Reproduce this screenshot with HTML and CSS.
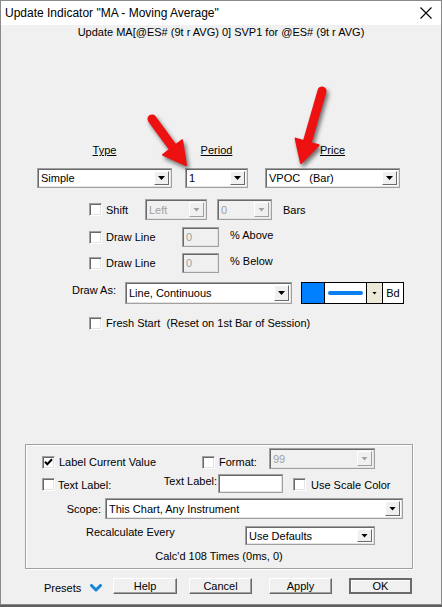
FILE: index.html
```html
<!DOCTYPE html>
<html>
<head>
<meta charset="utf-8">
<link rel="stylesheet" href="styles.css">
</head>
<body>
<div class="window">
  <div class="titlebar">
    <span class="title">Update Indicator "MA - Moving Average"</span>
    <svg class="close" width="12" height="12" viewBox="0 0 12 12"><path d="M0.5 0.5L11.5 11.5M11.5 0.5L0.5 11.5" stroke="#000" stroke-width="1.1" fill="none"/></svg>
  </div>
  <div class="subtitle">Update MA[@ES# (9t r AVG) 0] SVP1 for @ES# (9t r AVG)</div>

  <div class="row hdrs">
    <div class="c1 hdr"><u>Type</u></div>
    <div class="c2 hdr"><u>Period</u></div>
    <div class="c3 hdr"><u>Price</u></div>
  </div>
  <div class="row combos">
    <div class="c1 combo"><span class="val">Simple</span><span class="dd"><i class="tri"></i></span></div>
    <div class="c2 combo"><span class="val">1</span><span class="dd"><i class="tri"></i></span></div>
    <div class="c3 combo"><span class="val">VPOC   (Bar)</span><span class="dd"><i class="tri"></i></span></div>
  </div>

  <div class="row r-shift">
    <span class="cb"></span><span class="lbl w-shift">Shift</span>
    <div class="combo dis w-left"><span class="val">Left</span><span class="dd"><i class="tri"></i></span></div>
    <div class="combo dis w-zero"><span class="val">0</span><span class="dd"><i class="tri"></i></span></div>
    <span class="bars">Bars</span>
  </div>
  <div class="row r-dl1">
    <span class="cb"></span><span class="lbl w-dl">Draw Line</span>
    <span class="inp dis w-pct">0</span><span class="pct">% Above</span>
  </div>
  <div class="row r-dl2">
    <span class="cb"></span><span class="lbl w-dl">Draw Line</span>
    <span class="inp dis w-pct">0</span><span class="pct">% Below</span>
  </div>
  <div class="row r-drawas">
    <span class="drawas">Draw As:</span>
    <div class="combo w-drawas"><span class="val">Line, Continuous</span><span class="dd"><i class="tri"></i></span></div>
    <div class="colorctl">
      <span class="swatch"></span>
      <span class="linebox"><i class="bluline"></i></span>
      <span class="cdd"><i class="tri"></i></span>
      <span class="bd">Bd</span>
    </div>
  </div>
  <div class="row r-fresh">
    <span class="cb"></span><span class="lbl">Fresh Start&nbsp; (Reset on 1st Bar of Session)</span>
  </div>

  <div class="group">
    <div class="grow g1">
      <span class="cb checked"><svg width="9" height="9" viewBox="0 0 9 9"><path d="M1 3.8L3.3 6.3L8 1.2" stroke="#000" stroke-width="2" fill="none"/></svg></span>
      <span class="lbl w-lcv">Label Current Value</span>
      <span class="cb"></span>
      <span class="lbl w-fmt">Format:</span>
      <div class="combo dis w-fmtc"><span class="val">99</span><span class="dd"><i class="tri"></i></span></div>
    </div>
    <div class="grow g2">
      <span class="cb"></span>
      <span class="lbl w-tl">Text Label:</span>
      <span class="tl2">Text Label:</span>
      <span class="inp w-tlin"></span>
      <span class="cb cb-usc"></span>
      <span class="lbl lbl-usc">Use Scale Color</span>
    </div>
    <div class="grow g3">
      <span class="scope">Scope:</span>
      <div class="combo w-scope"><span class="val">This Chart, Any Instrument</span><span class="dd"><i class="tri"></i></span></div>
    </div>
    <div class="grow g4">
      <span class="recalc">Recalculate Every</span>
      <div class="combo w-recalc"><span class="val">Use Defaults</span><span class="dd"><i class="tri"></i></span></div>
    </div>
    <div class="g5">Calc'd 108 Times (0ms, 0)</div>
  </div>

  <div class="row r-btns">
    <span class="presets">Presets</span>
    <svg class="chev" width="12" height="8" viewBox="0 0 12 8"><path d="M1.5 1.5L6 6L10.5 1.5" stroke="#1585d8" stroke-width="3" fill="none" stroke-linecap="round" stroke-linejoin="round"/></svg>
    <span class="pbtn b-help">Help</span>
    <span class="pbtn b-cancel">Cancel</span>
    <span class="pbtn b-apply">Apply</span>
    <span class="pbtn b-ok">OK</span>
  </div>

  <svg class="arrows" width="442" height="605" viewBox="0 0 442 605">
    <g fill="#ee1111" stroke="#ee1111">
      <line x1="152" y1="119" x2="174" y2="149" stroke-width="9" stroke-linecap="round"/>
      <polygon points="186,165 182.1,140.2 163.1,154.8" stroke-width="2" stroke-linejoin="round"/>
      <line x1="322" y1="91" x2="307" y2="143" stroke-width="9" stroke-linecap="round"/>
      <polygon points="301,163 318.6,145.2 295.6,138.6" stroke-width="2" stroke-linejoin="round"/>
    </g>
  </svg>
</div>
</body>
</html>
```

FILE: styles.css
```css
* { box-sizing: border-box; }
html, body { margin: 0; padding: 0; }
body {
  width: 442px;
  height: 607px;
  overflow: hidden;
  background: #5e5e5e;
  font-family: "Liberation Sans", Arial, sans-serif;
  font-size: 11px;
  color: #000;
}
.window {
  position: relative;
  width: 442px;
  height: 605px;
  background: #f0f0f0;
  border: 1px solid #8a8a8a;
}
.titlebar {
  height: 24px;
  background: #fff;
  display: flex;
  align-items: center;
  justify-content: space-between;
  padding: 0 9px 0 4px;
}
.title { font-size: 12px; }
.subtitle {
  margin-top: 1px;
  height: 13px;
  line-height: 13px;
  text-align: center;
}
.row { display: flex; align-items: center; }
.c1 { width: 135px; margin-left: 36px; }
.c2 { width: 63px; margin-left: 13px; }
.c3 { width: 135px; margin-left: 17px; }
.hdrs { margin-top: 105px; height: 13px; }
.hdr { text-align: center; line-height: 13px; }
.combos { margin-top: 11px; height: 20px; }
.combos .combo { height: 20px; }

.combo {
  display: flex;
  align-items: stretch;
  background: #fff;
  border: 1px solid #a0a0a0;
  box-shadow: inset 1px 1px #696969, inset -1px -1px #e3e3e3;
  padding: 2px;
  height: 21px;
}
.combo .val {
  flex: 1;
  white-space: pre;
  overflow: hidden;
  padding-left: 1px;
  display: flex;
  align-items: center;
}
.combo .dd {
  width: 15px;
  background: #f0f0f0;
  border: 1px solid;
  border-color: #fff #696969 #696969 #fff;
  display: flex;
  align-items: center;
  justify-content: center;
}
.tri {
  display: block;
  width: 7px;
  height: 4px;
  background: #000;
  clip-path: polygon(0 0, 100% 0, 50% 100%);
}
.combo.dis { background: #f0f0f0; color: #a0a0a0; }
.combo.dis .dd { border-color: #fff #a0a0a0 #a0a0a0 #fff; }
.combo.dis .tri { background: #a0a0a0; }

.cb {
  flex: none;
  width: 13px;
  height: 13px;
  background: #fff;
  border: 1px solid;
  border-color: #a0a0a0 #fff #fff #a0a0a0;
  box-shadow: inset 1px 1px #696969, inset -1px -1px #e3e3e3;
  display: flex;
  align-items: center;
  justify-content: center;
}
.lbl { margin-left: 4px; white-space: nowrap; line-height: 13px; }

.inp {
  display: flex;
  align-items: flex-end;
  height: 20px;
  background: #fff;
  border: 1px solid #a0a0a0;
  box-shadow: inset 1px 1px #696969, inset -1px -1px #e3e3e3;
  padding: 0 3px 3px;
}
.inp.dis { background: #f0f0f0; color: #a0a0a0; }

.r-shift { margin-top: 11px; height: 21px; margin-left: 88px; }
.w-shift { width: 39px; margin-top: 2px; }
.w-left { width: 62px; }
.w-zero { width: 55px; margin-left: 10px; }
.bars { margin-left: 11px; }

.r-dl1 { margin-top: 7px; height: 20px; margin-left: 88px; align-items: center; }
.r-dl2 { margin-top: 6px; height: 20px; margin-left: 88px; align-items: center; }
.w-dl { width: 76px; }
.w-pct { width: 37px; }
.pct { margin-left: 11px; align-self: flex-start; margin-top: 2px; }

.r-drawas { margin-top: 9px; height: 22px; margin-left: 71px; align-items: flex-start; }
.drawas { width: 53px; margin-top: 2px; }
.w-drawas { width: 167px; height: 22px; }
.colorctl {
  margin-left: 9px;
  width: 103px;
  height: 22px;
  display: flex;
  border: 1px solid #000;
  background: #fff;
}
.swatch { width: 23px; background: #0080ff; border-right: 1px solid #000; }
.linebox { width: 42px; display: flex; align-items: center; justify-content: center; border-right: 1px solid #000; }
.bluline { display: block; width: 35px; height: 4px; border-radius: 2px; background: #0a7ff0; }
.cdd { width: 15px; background: #ece9d8; display: flex; align-items: center; justify-content: center; }
.cdd .tri { width: 5px; height: 3px; }
.bd { flex: 1; display: flex; align-items: center; justify-content: center; border-left: 1px solid #000; }

.r-fresh { margin-top: 13px; height: 13px; margin-left: 88px; }

.group {
  margin-top: 114px;
  margin-left: 24px;
  width: 388px;
  height: 125px;
  border: 1px solid #a0a0a0;
  box-shadow: inset 1px 1px #fff, 1px 1px #fff;
}
.grow { display: flex; align-items: flex-start; }
.g1 { margin-top: 3px; height: 21px; padding-left: 16px; }
.g1 .cb { margin-top: 8px; }
.g1 .lbl { margin-top: 8px; }
.w-lcv { width: 143px; }
.w-fmt { width: 50px; }
.w-fmtc { width: 106px; }

.g2 { margin-top: 5px; height: 19px; padding-left: 16px; }
.g2 .cb { margin-top: 4px; }
.w-tl { width: 104px; margin-top: 5px; margin-left: 3px; }
.tl2 { width: 56px; text-align: right; padding-right: 1px; margin-top: 1px; white-space: nowrap; }
.w-tlin { width: 65px; height: 19px; }
.cb-usc { margin-left: 10px; }
.lbl-usc { margin-left: 5px; margin-top: 5px; }

.g3 { margin-top: 5px; height: 21px; align-items: center; }
.scope { width: 79px; text-align: right; padding-right: 4px; }
.w-scope { width: 298px; }

.g4 { margin-top: 7px; height: 19px; }
.recalc { margin-left: 60px; width: 159px; line-height: 13px; }
.w-recalc { width: 130px; height: 19px; }

.g5 { margin-top: 5px; height: 13px; line-height: 13px; text-align: center; }

.r-btns { margin-top: 9px; height: 16px; margin-left: 43px; align-items: flex-start; }
.presets { width: 46px; margin-top: 4px; line-height: 13px; }
.chev { margin-top: 6px; flex: none; }
.pbtn {
  height: 16px;
  line-height: 14px;
  text-align: center;
  background: #f0f0f0;
  border: 1px solid;
  border-color: #fff #696969 #696969 #fff;
  box-shadow: inset -1px -1px #a0a0a0;
}
.b-help { width: 64px; margin-left: 11px; }
.b-cancel { width: 63px; margin-left: 12px; }
.b-apply { width: 63px; margin-left: 17px; }
.b-ok {
  width: 63px;
  margin-left: 17px;
  border: 2px solid #6a6a6a;
  box-shadow: inset 1px 1px #fff;
  line-height: 12px;
}

.arrows {
  position: absolute;
  top: -1px;
  left: -1px;
  pointer-events: none;
  filter: drop-shadow(2px 3px 2px rgba(0, 0, 0, 0.55));
}
```
